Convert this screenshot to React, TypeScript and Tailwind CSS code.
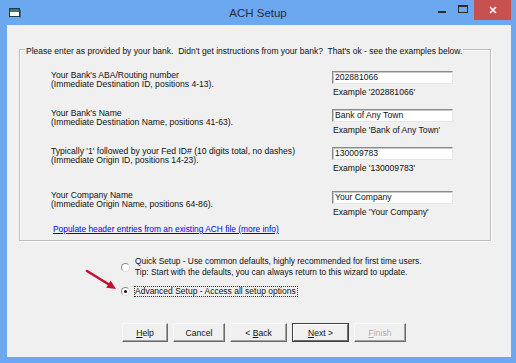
import React from "react";

const F = "font-['Liberation_Sans',Arial,sans-serif]";

function Row({ l1, l2, value, example, mt }: { l1: string; l2: string; value: string; example: string; mt: string }) {
  return (
    <div className={`flex ${mt}`}>
      <div className="w-[281px] text-[8.6px] leading-[9px] text-[#111]">
        <div>{l1}</div>
        <div>{l2}</div>
      </div>
      <div className="flex flex-col w-[121px]">
        <div className="h-[13px] bg-white border border-t-[#8a8a8a] border-l-[#8a8a8a] border-r-[#e6e6e6] border-b-[#e6e6e6] shadow-[inset_1px_1px_0_#c8c8c8] pl-[2px] text-[8.6px] leading-[11px] text-[#111] whitespace-nowrap overflow-hidden">
          {value}
        </div>
        <div className="mt-[4px] ml-[1px] text-[8.6px] leading-[9px] text-[#111] whitespace-nowrap">{example}</div>
      </div>
    </div>
  );
}

function Radio({ checked }: { checked?: boolean }) {
  return (
    <div className="w-[9px] h-[9px] rounded-full border border-t-[#8a8a8a] border-l-[#8a8a8a] border-r-[#dcdcdc] border-b-[#dcdcdc] bg-white flex items-center justify-center shrink-0">
      {checked && <div className="w-[3px] h-[3px] rounded-full bg-[#111]" />}
    </div>
  );
}

function Btn({ w, children, def, disabled }: { w: string; children: React.ReactNode; def?: boolean; disabled?: boolean }) {
  const frame = def
    ? "border border-[#404040]"
    : "border border-t-[#f8f8f8] border-l-[#f8f8f8] border-r-[#6a6a6a] border-b-[#6a6a6a]";
  return (
    <div className={`${w} h-[19px] ${frame} bg-[#f0f0f0] shadow-[inset_-1px_-1px_0_#a0a0a0] flex items-center justify-center text-[8.6px] leading-[10px] ${disabled ? "text-[#a8a8a8] [text-shadow:1px_1px_0_#fff]" : "text-[#111]"}`}>
      {def ? (
        <div className="w-full h-full border border-t-[#fff] border-l-[#fff] border-r-[#6a6a6a] border-b-[#6a6a6a] flex items-center justify-center">{children}</div>
      ) : (
        children
      )}
    </div>
  );
}

export default function App() {
  return (
    <div className={`relative w-[516px] h-[363px] bg-[#6ba8f0] flex flex-col overflow-hidden ${F}`}>
      {/* Title bar */}
      <div className="grid grid-cols-[1fr_auto_1fr] h-[25px] shrink-0">
        <div className="flex items-start">
          <svg className="ml-[9px] mt-[8px]" width="12" height="10" viewBox="0 0 12 10">
            <rect x="0.5" y="0.5" width="10" height="8" fill="#ffffff" stroke="#1d3b48" />
            <rect x="1" y="1" width="9" height="3" fill="#2f7d73" />
            <rect x="10.5" y="2" width="1.5" height="7.5" fill="#1d3b48" opacity="0.6" />
          </svg>
        </div>
        <div className="pt-[5px] text-[11.5px] leading-[16px] text-[#2c2c2c]">ACH Setup</div>
        <div className="flex justify-end items-start">
          <div className="w-[21px] h-[20px] flex justify-center">
            <div className="mt-[11px] w-[8px] h-[2px] bg-[#2b2b2b]" />
          </div>
          <div className="w-[22px] h-[20px] flex justify-center">
            <div className="mt-[5px] w-[10px] h-[8px] border border-[#2b2b2b] border-t-2" />
          </div>
          <div className="w-[37px] h-[20px] mr-[5px] bg-[#c75050] flex items-center justify-center">
            <svg width="8" height="8" viewBox="0 0 8 8">
              <path d="M1 1 L7 7 M7 1 L1 7" stroke="#ffffff" strokeWidth="1.6" />
            </svg>
          </div>
        </div>
      </div>

      {/* Client area */}
      <div className="ml-[7px] mr-[5px] mb-[6px] flex-1 bg-[#f0f0f0] flex flex-col">
        <div className="ml-[12px] mr-[20px] mt-[24px] h-[192px] border border-[#bdbdbd] shadow-[1px_1px_0_#fff,inset_1px_1px_0_#fff] flex flex-col">
          <div className="-mt-[4px] ml-[5px] w-fit px-[1px] bg-[#f0f0f0] text-[8.5px] leading-[10px] text-[#111] whitespace-nowrap">
            Please enter as provided by your bank.&nbsp; Didn't get instructions from your bank?&nbsp; That's ok - see the examples below.
          </div>
          <div className="pl-[31px] flex flex-col">
            <Row
              mt="mt-[15px]"
              l1="Your Bank's ABA/Routing number"
              l2="(Immediate Destination ID, positions 4-13)."
              value="202881066"
              example="Example '202881066'"
            />
            <Row
              mt="mt-[12px]"
              l1="Your Bank's Name"
              l2="(Immediate Destination Name, positions 41-63)."
              value="Bank of Any Town"
              example="Example 'Bank of Any Town'"
            />
            <Row
              mt="mt-[12px]"
              l1="Typically '1' followed by your Fed ID# (10 digits total, no dashes)"
              l2="(Immediate Origin ID, positions 14-23)."
              value="130009783"
              example="Example '130009783'"
            />
            <Row
              mt="mt-[18px]"
              l1="Your Company Name"
              l2="(Immediate Origin Name, positions 64-86)."
              value="Your Company"
              example="Example 'Your Company'"
            />
            <div className="mt-[8px] ml-[2px] text-[8.4px] leading-[9px] text-[#0000ee] underline">
              Populate header entries from an existing ACH file (more info)
            </div>
          </div>
        </div>

        <div className="mt-[15px] ml-[114px] flex items-center gap-[5px]">
          <Radio />
          <div className="text-[8.35px] leading-[11px] text-[#111]">
            <div>Quick Setup - Use common defaults, highly recommended for first time users.</div>
            <div>Tip: Start with the defaults, you can always return to this wizard to update.</div>
          </div>
        </div>
        <div className="mt-[8px] ml-[114px] flex items-center gap-[4px]">
          <Radio checked />
          <span className="border border-dotted border-[#333] leading-[9px] text-[8.5px] text-[#111] pr-[1px]">
            Advanced Setup - Access all setup options
          </span>
        </div>

        <div className="mt-[26px] ml-[115px] flex gap-[5px]">
          <Btn w="w-[46px]"><span><span className="underline">H</span>elp</span></Btn>
          <Btn w="w-[52px]">Cancel</Btn>
          <Btn w="w-[57px]"><span>&lt; <span className="underline">B</span>ack</span></Btn>
          <Btn w="w-[57px]" def><span><span className="underline">N</span>ext &gt;</span></Btn>
          <Btn w="w-[52px]" disabled><span><span className="underline">F</span>inish</span></Btn>
        </div>
      </div>

      {/* annotation arrow */}
      <svg className="absolute left-[84px] top-[267px]" width="36" height="26" viewBox="0 0 36 26">
        <line x1="3" y1="4" x2="25" y2="17.5" stroke="#c8102e" strokeWidth="2.6" strokeLinecap="round" />
        <polygon points="32,22 22.2,20.8 26.6,13.6" fill="#c8102e" />
      </svg>
    </div>
  );
}
